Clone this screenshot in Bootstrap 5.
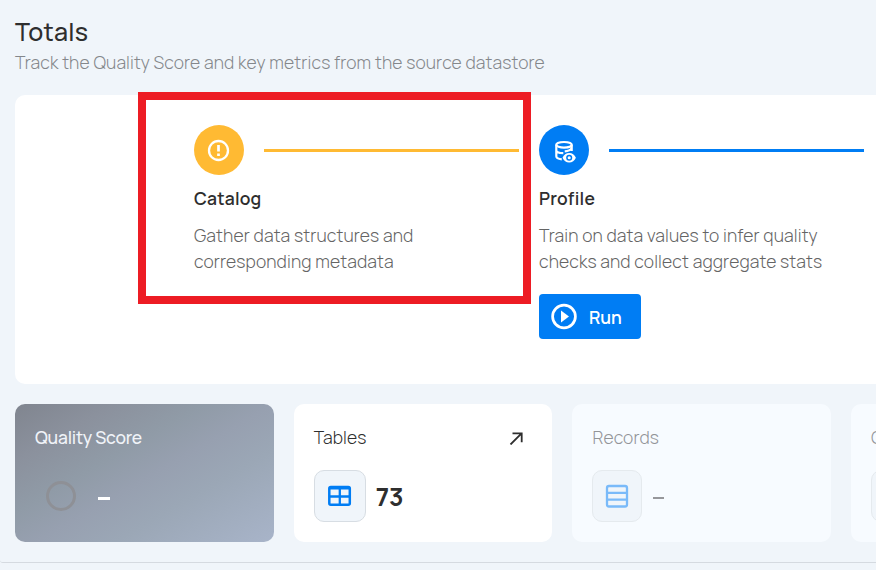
<!DOCTYPE html>
<html lang="en">
<head>
<meta charset="utf-8">
<meta name="viewport" content="width=device-width, initial-scale=1">
<title>Totals</title>
<link href="https://cdn.jsdelivr.net/npm/bootstrap@5.3.0/dist/css/bootstrap.min.css" rel="stylesheet">
<style>
html,body{height:570px;overflow:hidden}
body{background:#f0f5fa;font-family:Manrope,Inter,sans-serif;color:#2e2e2e;font-size:17.5px}
.panel{width:1144px;height:563px;padding:0 15px;border-bottom:1px solid #d5dae0;border-radius:0 0 0 3px}
.panel-title{font-size:25px;line-height:32px;padding-top:16px;letter-spacing:.25px;font-weight:500}
.sub{line-height:26px;padding-top:1px;color:#84878b;font-weight:300;white-space:nowrap;letter-spacing:.14px}
.steps{margin-top:20px;height:289px;border-radius:10px;padding:30px 0 0 179px}
.step{width:345px}
.disc{width:50px;height:50px}
.warn{background:#ffba33}.blue{background:#007df4}
.rule{width:255px;height:3px;margin-left:20px;margin-top:1px}
.step-name{font-size:17.5px;font-weight:600;line-height:26px;margin-top:10px;letter-spacing:.2px}
.step-text{line-height:26px;margin-top:11px;color:#646464;font-weight:300;white-space:nowrap;letter-spacing:.14px}
.run{width:102px;height:45px;margin-top:20px;padding:0 0 0 11px;gap:11px;border-radius:4px;color:#fff;font-size:17.5px;font-weight:600}
.run span{padding-top:2px;letter-spacing:-.1px}
.run:hover{background:#006fd9;color:#fff}
.tiles{gap:20px;margin-top:20px}
.tile{width:258.7px;height:138px;border-radius:10px;padding:20px}
.tile-name{line-height:27px;font-weight:300;letter-spacing:.14px}
.tile-body{margin-top:19px;height:52px}
.score{background:linear-gradient(150deg,#80858f 0%,#8b919d 20%,#909ba7 38%,#97a0b0 52%,#9ba7b6 68%,#a8b4c9 100%);color:#f0f3f8}
.score .tile-name{font-weight:500;letter-spacing:-.2px}
.muted-tile{background:#f7fbff;color:#929498}
.chip{width:52px;height:52px;border:1px solid #d7dde3;border-radius:10px;background:#f0f5fa}
.muted-tile .chip{width:50px;border-color:#e5eaee}
.amount{font-size:25px;font-weight:700;margin-left:10px;padding-top:2px}
.dash{width:11px;height:2px;background:#96979b}
.score .dash{width:12px;height:3px;background:#fff;margin-left:22px;margin-top:4px}
.muted-tile .dash{margin-left:11px}
.ring{width:30px;height:30px;border:3px solid #8e9096;margin-left:11px}
.outline-box{left:138px;top:92px;width:393px;height:212px;border:8px solid #ed1c24}
</style>
</head>
<body class="position-relative">
<main class="panel">
  <h1 class="panel-title mb-0">Totals</h1>
  <div class="sub">Track the Quality Score and key metrics from the source datastore</div>
  <section class="steps bg-white d-flex align-items-start">
    <div class="step flex-shrink-0">
      <div class="d-flex align-items-center">
        <div class="disc warn rounded-circle d-flex align-items-center justify-content-center">
          <svg width="24" height="24" viewBox="0 0 24 24" fill="none" stroke="#fff" stroke-width="2.3"><circle cx="11.5" cy="12.5" r="9.5"/><path d="M11.500 7v6.500M11.500 15.500v2.500" stroke-width="2.700"/></svg>
        </div>
        <div class="rule warn"></div>
      </div>
      <div class="step-name">Catalog</div>
      <div class="step-text">Gather data structures and<br>corresponding metadata</div>
    </div>
    <div class="step flex-shrink-0">
      <div class="d-flex align-items-center">
        <div class="disc blue rounded-circle d-flex align-items-center justify-content-center">
          <svg width="24" height="25" viewBox="0 0 24 25" fill="none" stroke="#fff" stroke-width="2.200"><ellipse cx="12" cy="6.800" rx="7.700" ry="2.800"/><path d="M4.300 6.800v11.500c0 1.700 2.300 2.700 5.500 3M4.300 12.300c0 1.900 3.200 2.900 7 2.900M19.700 6.800v6.200M19.700 10c-1 1.800-3.800 3.200-7 3.400"/><path d="M10.500 19.800c1.300-3.200 3.700-4.800 6.700-4.800s5.400 1.600 6.700 4.800c-1.300 3.100-3.700 4.700-6.700 4.700s-5.400-1.600-6.700-4.700z" fill="#fff" stroke="none"/><circle cx="17.200" cy="19.800" r="2.300" stroke="#007df4" stroke-width="1.500" fill="#fff"/></svg>
        </div>
        <div class="rule blue"></div>
      </div>
      <div class="step-name">Profile</div>
      <div class="step-text">Train on data values to infer quality<br>checks and collect aggregate stats</div>
      <button class="btn run blue d-flex align-items-center" type="button">
        <svg width="27" height="27" viewBox="0 0 27 27"><circle cx="13" cy="13.500" r="11.400" fill="none" stroke="#fff" stroke-width="2.700"/><path d="M10 7.500v12l8-6z" fill="#fff"/></svg>
        <span>Run</span>
      </button>
    </div>
  </section>
  <section class="tiles d-flex">
    <div class="tile score flex-shrink-0">
      <div class="tile-name">Quality Score</div>
      <div class="tile-body d-flex align-items-center"><div class="ring rounded-circle"></div><div class="dash"></div></div>
    </div>
    <div class="tile bg-white flex-shrink-0">
      <div class="tile-name d-flex justify-content-between align-items-center">Tables
        <svg class="me-2" width="15" height="14" viewBox="0 0 15 14" fill="none" stroke="#2e2e2e" stroke-width="1.800"><path d="M1.500 13.500 12.300 2.700M3.500 2.300h9.200v9"/></svg>
      </div>
      <div class="tile-body d-flex align-items-center">
        <div class="chip d-flex align-items-center justify-content-center">
          <svg width="24" height="22" viewBox="0 0 24 22" fill="none" stroke="#007df4" stroke-width="2.500"><rect x="1.300" y="2" width="20.500" height="17.700" rx="1.500"/><path d="M1.500 3.300h20.500M1.500 11.500h20.500M11.800 4v16" stroke-width="2.300"/></svg>
        </div>
        <div class="amount">73</div>
      </div>
    </div>
    <div class="tile muted-tile flex-shrink-0">
      <div class="tile-name">Records</div>
      <div class="tile-body d-flex align-items-center">
        <div class="chip d-flex align-items-center justify-content-center">
          <svg width="24" height="24" viewBox="0 0 24 24" fill="none" stroke="#7abaf9" stroke-width="2.300"><rect x="2" y="2" width="20" height="20.500" rx="2"/><path d="M2 8.800h20M2 15.700h20"/></svg>
        </div>
        <div class="dash mt-1"></div>
      </div>
    </div>
    <div class="tile muted-tile flex-shrink-0">
      <div class="tile-name">Checks</div>
      <div class="tile-body d-flex align-items-center"><div class="chip"></div></div>
    </div>
  </section>
</main>
<div class="outline-box position-absolute"></div>
<script src="https://cdn.jsdelivr.net/npm/bootstrap@5.3.0/dist/js/bootstrap.bundle.min.js"></script>
</body>
</html>
